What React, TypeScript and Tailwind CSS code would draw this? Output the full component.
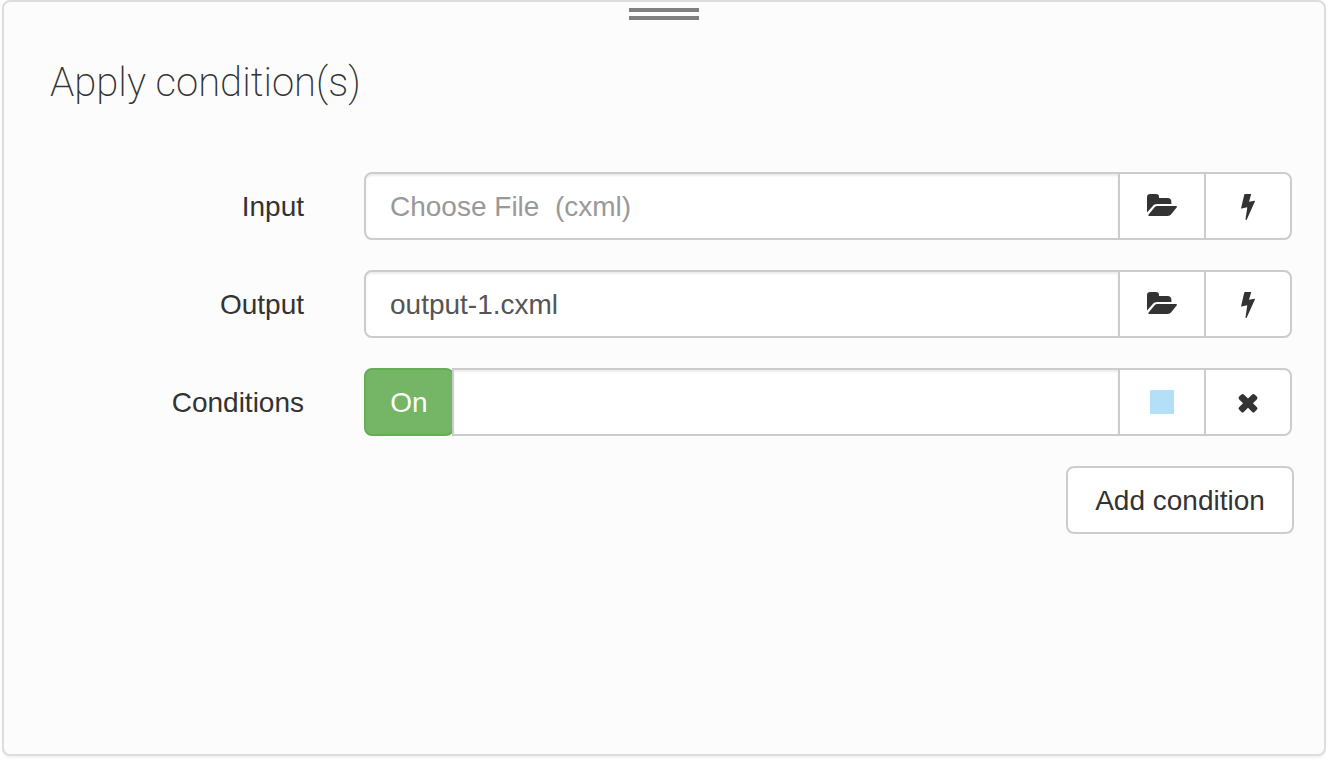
import { useState } from "react";
import type { ReactNode } from "react";

const fieldClass =
  "h-full min-w-0 flex-1 border-2 border-[#ccc] bg-white px-6 pt-0.5 text-[28px] text-[#555] shadow-[inset_0_2px_2px_rgba(0,0,0,0.075)] outline-none placeholder:text-[#999]";

function FolderOpenIcon() {
  return (
    <svg width="30" height="24" viewBox="0 0 30 24" fill="currentColor" aria-hidden="true">
      <path d="M0 18.5V3.2C0 1.2 1.2 0 3.2 0H9C11 0 12 1.2 12 3V4H20.6C23 4 24.4 5.4 24.4 8V10H10.5C8 10 6.7 10.8 5.4 12.4L0 18.5Z" />
      <path d="M2.2 22C1.2 22 .9 21.3 1.6 20.4L7 13.9C8 12.6 9 12 10.6 12H29C30 12 30.3 12.6 29.6 13.5L24.6 19.8C23.4 21.3 22.2 22 20.4 22Z" />
    </svg>
  );
}

function FlashIcon() {
  return (
    <svg width="14" height="26" viewBox="0 0 14 26" fill="currentColor" aria-hidden="true">
      <path d="M4 0H9.7C10.1 0 10.2 .2 10.1 .6L8 7.8L13.5 6.8C14 6.7 14.1 7.1 13.9 7.6L5.8 25.4C5.5 26.1 4.4 26.1 4.5 25.2L6.3 13.3L.6 14.6C.1 14.7 0 14.4 .1 13.9L3.3 .6C3.4 .2 3.6 0 4 0Z" />
    </svg>
  );
}

function RemoveIcon() {
  return (
    <svg width="20" height="20" viewBox="0 0 20 20" fill="currentColor" aria-hidden="true">
      <path d="M1 3.8L3.4 1.4Q4.6 .4 5.8 1.4L10 5.6L14.2 1.4Q15.4 .4 16.6 1.4L19 3.8Q20 5 19 6.2L15 10.2L19 14.2Q20 15.4 19 16.6L16.6 19Q15.4 20 14.2 19L10 14.8L5.8 19Q4.6 20 3.4 19L1 16.6Q0 15.4 1 14.2L5 10.2L1 6.2Q0 5 1 3.8Z" />
    </svg>
  );
}

function AddonButton({ label, last, children }: { label: string; last?: boolean; children: ReactNode }) {
  return (
    <button
      type="button"
      aria-label={label}
      className={`-ml-0.5 flex h-full w-22 shrink-0 items-center justify-center border-2 border-[#ccc] bg-white text-[#333] ${
        last ? "rounded-r-lg pt-0.5" : ""
      }`}
    >
      {children}
    </button>
  );
}

function FormRow({ label, htmlFor, children }: { label: string; htmlFor: string; children: ReactNode }) {
  return (
    <div className="flex items-center gap-[60px] pr-0.5">
      <label htmlFor={htmlFor} className="w-[254px] shrink-0 pt-0.5 text-right">
        {label}
      </label>
      <div className="flex h-[68px] min-w-0 flex-1">{children}</div>
    </div>
  );
}

function FileRow({ id, label, initial, placeholder }: { id: string; label: string; initial: string; placeholder?: string }) {
  const [value, setValue] = useState(initial);
  return (
    <FormRow label={label} htmlFor={id}>
      <input
        id={id}
        type="text"
        value={value}
        placeholder={placeholder}
        onChange={(e) => setValue(e.target.value)}
        className={`${fieldClass} rounded-l-lg`}
      />
      <AddonButton label="Browse">
        <FolderOpenIcon />
      </AddonButton>
      <AddonButton label="Run" last>
        <FlashIcon />
      </AddonButton>
    </FormRow>
  );
}

export default function App() {
  const [enabled, setEnabled] = useState(true);
  const [condition, setCondition] = useState("");

  return (
    <div className="flex min-h-screen bg-white px-0.5 pb-1 font-['Liberation_Sans',Arial,sans-serif] text-[28px] leading-10 text-[#333]">
      <main className="flex flex-1 flex-col rounded-lg border-2 border-[#ddd] bg-[#fcfcfc] shadow-[0_2px_2px_rgba(0,0,0,0.05)]">
        <div className="mt-1.5 h-3 w-[70px] self-center border-y-4 border-[#808080]" />

        <form className="flex flex-col gap-[30px] pr-[30px] pl-[46px]" onSubmit={(e) => e.preventDefault()}>
          <h1 className="mt-9 mb-8 font-['Roboto',sans-serif] text-[40px] leading-[54px] font-extralight">
            Apply condition(s)
          </h1>
          <FileRow id="input-file" label="Input" initial="" placeholder={"Choose File \u00a0(cxml)"} />
          <FileRow id="output-file" label="Output" initial="output-1.cxml" />
          <FormRow label="Conditions" htmlFor="condition">
            <button
              type="button"
              aria-pressed={enabled}
              onClick={() => setEnabled(!enabled)}
              className="h-full w-[90px] shrink-0 rounded-lg border-2 border-[#67ad58] bg-[#74b566] pt-0.5 text-white"
            >
              {enabled ? "On" : "Off"}
            </button>
            <input
              id="condition"
              type="text"
              value={condition}
              onChange={(e) => setCondition(e.target.value)}
              className={`${fieldClass} -ml-0.5`}
            />
            <AddonButton label="Color">
              <span className="size-6 rounded-[1px] bg-[#b3dff8]" />
            </AddonButton>
            <AddonButton label="Remove" last>
              <RemoveIcon />
            </AddonButton>
          </FormRow>
          <button
            type="button"
            className="h-[68px] w-[228px] self-end rounded-lg border-2 border-[#ccc] bg-white pt-0.5 whitespace-nowrap"
          >
            Add condition
          </button>
        </form>
      </main>
    </div>
  );
}
